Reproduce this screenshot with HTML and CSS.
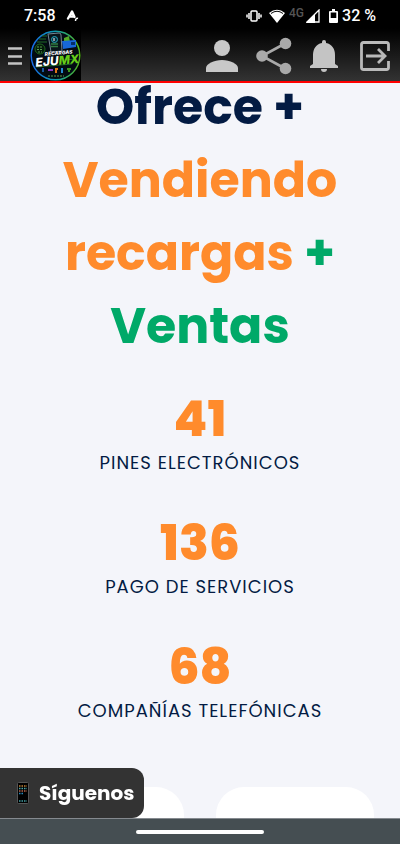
FILE: index.html
```html
<!DOCTYPE html>
<html lang="es">
<head>
<meta charset="utf-8">
<meta name="viewport" content="width=device-width, initial-scale=1">
<title>Recargas EJUMX</title>
<link rel="stylesheet" href="styles.css">
</head>
<body>
<header class="top">
  <div class="status">
    <span class="time">7:58</span>
    <svg class="app-mark" width="14" height="14" viewBox="0 0 14 14" fill="none" stroke="#fff"><path d="M2 9.500 6 2.500l2.500 5.500M4 7.500h4" stroke-width="2.400" stroke-linejoin="round" stroke-linecap="round"/><path d="M9.500 12c0-2 1-3 2.500-2.500" stroke-width="1.500"/></svg>
    <svg class="vibrate" width="16" height="14" viewBox="0 0 16 14" fill="none" stroke="#fff" stroke-width="1.500"><rect x="5" y="2" width="6" height="10" rx="1"/><path d="M3 4v6M13 4v6"/><path d="M1 5.500v3M15 5.500v3"/></svg>
    <svg class="wifi" width="16" height="14" viewBox="0 0 16 14"><path d="M0 4Q8-2.500 16 4L8 14z" fill="#fff"/><path d="M2 4.500Q8 0 14 4.500" fill="none" stroke="#050505" stroke-width="1"/></svg>
    <span class="network">4G</span>
    <svg class="signal" width="14" height="14" viewBox="0 0 14 14"><path d="M1 13 13 1v12z" fill="none" stroke="#fff" stroke-width="1.300"/><path d="M0 14 9 5v9z" fill="#fff"/></svg>
    <svg class="battery" width="9" height="14" viewBox="0 0 9 14"><path d="M3 0h3v2h2q1 0 1 1v10q0 1-1 1H1q-1 0-1-1V3q0-1 1-1h2z" fill="#fff"/><path d="M1.700 3.500h5.600V9H1.700z" fill="#000"/></svg>
    <span class="charge">32 %</span>
  </div>
  <nav class="bar">
    <button class="icon menu" aria-label="Menú"><svg width="14" height="20" viewBox="0 0 14 20" stroke="#c4c4c4" stroke-width="2.600"><path d="M0 2.500h14M0 10.500h14M0 17.500h14"/></svg></button>
    <a class="logo" href="#" aria-label="Recargas EJUMX">
      <svg width="51" height="51" viewBox="0 0 51 51">
        <defs><linearGradient id="ring"><stop offset="0" stop-color="#1769e8"/><stop offset=".5" stop-color="#0d9cae"/><stop offset="1" stop-color="#55b51b"/></linearGradient></defs>
        <path d="M0 0h51v51H0z" fill="#000"/>
        <circle cx="25.500" cy="25.500" r="24.300" fill="#030b13" stroke="url(#ring)" stroke-width="1.500"/>
        <path d="M9 9h7M7 12h10M12 6h5M35 30l10-1M6 37l36-3" stroke="#26832c" stroke-width=".8"/>
        <circle cx="10" cy="19" r="5" fill="#041b0b" stroke="#21671f"/>
        <path d="M7 17h6M7 19.500h6M8 22h4" stroke="#579852" stroke-width="1.200" stroke-dasharray="2 1"/>
        <path d="m18 4 11-1q2 0 2 2l1 16-11 1z" fill="#08141a" stroke="#758593"/>
        <circle cx="24.500" cy="9.500" r="3" fill="#092b3a" stroke="#25a6bb"/>
        <path d="M24 8v3" stroke="#fff"/><path d="M21 14h7M21 16.500h7" stroke="#307c42" stroke-width="1.300"/>
        <path d="m34 8 5-2 1 6-6 2z" fill="#55aa27"/><path d="m32 11 14-1v7l-13 2z" fill="#1768d9"/><path d="m41 12 4 0v3h-4z" fill="#062e6a"/>
        <g transform="rotate(-5 25 27)"><text class="logo-small" x="15" y="25">RECARGAS</text><text class="logo-big" x="5" y="35">EJU<tspan fill="#67ce18">MX</tspan></text></g>
        <g stroke-width="2"><path d="M13 38v4" stroke="#1758a0"/><path d="M18 40h5" stroke="#8a35be"/><path d="M26 38v5M25 39h3" stroke="#df7618"/><path d="M32 38v5" stroke="#2589d2"/><path d="M37 39h4M39 38v4" stroke="#3a971d"/></g>
        <path d="M18 46h16" stroke="#416d38" stroke-width="1.500" stroke-dasharray="2 1"/>
      </svg>
    </a>
    <div class="actions">
      <button class="icon" aria-label="Perfil"><svg width="32" height="32" viewBox="0 0 32 32" fill="#c8c8c8"><circle cx="16" cy="8" r="8"/><path d="M0 32v-4c0-4 8-8 16-8s16 4 16 8v4z"/></svg></button>
      <button class="icon" aria-label="Compartir"><svg width="36" height="38" viewBox="0 0 36 38" fill="#a9a9a9"><path d="M30 6 6 19l24 13" fill="none" stroke="#a9a9a9" stroke-width="2.600"/><circle cx="29.500" cy="6.500" r="5.800"/><circle cx="6" cy="19" r="5.800"/><circle cx="29.500" cy="31.500" r="5.800"/></svg></button>
      <button class="icon" aria-label="Notificaciones"><svg width="28" height="32" viewBox="0 0 28 32" fill="#c4c4c4"><path d="M12 3V2q0-2 2-2t2 2v1c6 1 9 6 9 12v9l3 2v2H0v-2l3-2v-9C3 9 6 4 12 3zM11 29h6q0 3-3 3t-3-3z"/></svg></button>
      <button class="icon" aria-label="Salir"><svg width="34" height="30" viewBox="-4 0 34 30" fill="none" stroke="#b9b9b9" stroke-width="2.800"><path d="M28.500 10V3.500q0-2-2-2h-23q-2 0-2 2v23q0 2 2 2h23q2 0 2-2V20M6 15h19M18 8l7 7-7 7"/></svg></button>
    </div>
  </nav>
</header>
<main class="page">
  <h1 class="headline">Ofrece + <span class="orange">Vendiendo recargas</span> <span class="green">+ Ventas</span></h1>
  <section class="stats">
    <div class="stat"><strong class="number">41</strong><span class="label">PINES ELECTRÓNICOS</span></div>
    <div class="stat"><strong class="number">136</strong><span class="label">PAGO DE SERVICIOS</span></div>
    <div class="stat"><strong class="number">68</strong><span class="label">COMPAÑÍAS TELEFÓNICAS</span></div>
  </section>
  <section class="cards"><div class="card"></div><div class="card"></div></section>
</main>
<footer class="bottom">
  <button class="follow"><svg width="12" height="22" viewBox="0 0 12 22"><rect x=".5" y=".5" width="11" height="21" rx="1" fill="#000" stroke="#555"/><g stroke-width="1.500" stroke-dasharray="1.500 1"><path d="M2 4h8" stroke="#c28136"/><path d="M2 6.500h8" stroke="#4ba7aa"/><path d="M2 9h8" stroke="#b8654c"/><path d="M2 11.500h4" stroke="#248bc0"/><path d="M2 19h8" stroke="#43a0a5"/></g></svg><span>Síguenos</span></button>
  <div class="gesture"><span class="handle"></span></div>
</footer>
</body>
</html>
```
FILE: styles.css
```css
* { box-sizing: border-box; }
body {
  margin: 0;
  height: 100vh;
  overflow: hidden;
  background: #f4f5fa;
  color: #031b43;
  font-family: Poppins, Inter, "Open Sans", sans-serif;
}
button { margin: 0; border: 0; font: inherit; }
svg { display: block; flex: none; }

.top {
  position: fixed;
  inset: 0 0 auto;
  z-index: 2;
  background: linear-gradient(#000 35%, #333);
  border-bottom: 2px solid #f00;
}
.status {
  display: flex;
  align-items: center;
  height: 30px;
  padding: 2px 24px 0;
  color: #fff;
  font: 500 16px/28px Roboto, sans-serif;
}
.app-mark { margin-left: 10px; }
.vibrate { margin-left: auto; }
.wifi { margin-left: 7px; }
.network { margin-left: 4px; color: #555; font-size: 12px; line-height: 22px; align-self: flex-start; }
.signal { margin-left: 2px; }
.battery { margin-left: 9px; }
.charge { margin-left: 4px; }
.bar { display: flex; align-items: center; height: 51px; padding: 0 10px 0 8px; }
.icon { display: flex; padding: 0; background: none; }
.logo { margin-left: 8px; }
.logo-small { fill: #fff; font: italic 800 5px Inter, sans-serif; }
.logo-big { fill: #fff; font: italic 800 12px Inter, sans-serif; }
.actions { display: flex; align-items: center; gap: 18px; margin-left: auto; }

.page { padding: 71px 26px 0; text-align: center; }
.headline { margin: 0; font-size: 49px; font-weight: 700; line-height: 73px; }
.orange { color: #ff8b2c; }
.green { color: #00a968; }
.stats { display: grid; gap: 37px; margin-top: 26px; }
.stat { display: grid; }
.number { color: #ff8b2c; font-size: 49px; font-weight: 800; line-height: 60px; }
.label { font-size: 18px; line-height: 27px; letter-spacing: 1px; }
.cards { display: grid; grid-template-columns: 1fr 1fr; gap: 32px; margin-top: 63px; }
.card { height: 57px; border-radius: 28px 28px 0 0; background: #fff; }

.bottom { position: fixed; inset: auto 0 0; z-index: 2; }
.follow {
  display: flex;
  align-items: center;
  gap: 10px;
  height: 50px;
  padding: 0 10px 0 17px;
  border-radius: 0 12px 12px 0;
  background: #333;
  color: #fff;
  font-size: 20px;
  font-weight: 700;
}
.gesture { display: flex; justify-content: center; height: 26px; padding-top: 11px; background: #454e52; border-top: 1px solid #858a8f; }
.handle { width: 128px; height: 4px; border-radius: 2px; background: #fff; }
```
